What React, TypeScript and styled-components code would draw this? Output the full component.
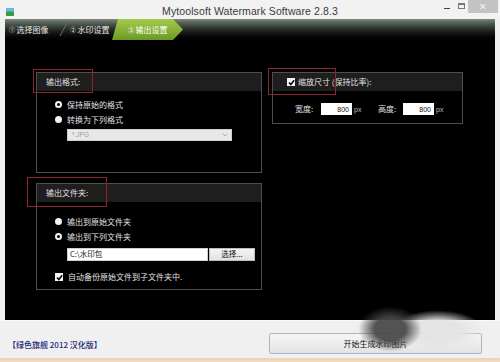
import React from 'react';
import styled, { createGlobalStyle } from 'styled-components';

const Global = createGlobalStyle`
  html, body { margin: 0; padding: 0; width: 500px; height: 362px; overflow: hidden; background: #f0f0f0; }
  body { font-family: "Liberation Sans", "Noto Sans CJK SC", sans-serif; }
  * { box-sizing: border-box; }
`;

const CJK = `"Noto Sans CJK SC", "Liberation Sans", sans-serif`;

const Window = styled.div`
  position: relative;
  width: 500px;
  height: 362px;
  display: flex;
  flex-direction: column;
  background: #f0f0f0;
  overflow: hidden;
`;

const TitleBar = styled.div`
  height: 19px;
  display: grid;
  grid-template-columns: 1fr auto 1fr;
  align-items: center;
  background: #f2f2f2;
`;

const TitleIcon = styled.div`
  padding-left: 6px;
  padding-top: 4px;
  display: flex;
  align-items: center;
`;

const TitleText = styled.div`
  font-family: "Liberation Sans", sans-serif;
  font-size: 10.5px;
  color: #3a3a3a;
  letter-spacing: 0.1px;
  padding-top: 2px;
`;

const Controls = styled.div`
  display: flex;
  justify-content: flex-end;
  align-self: start;
  padding-right: 2px;
  height: 19px;
`;

const CtlBtn = styled.div<{ $w: number }>`
  width: ${p => p.$w}px;
  height: 13px;
  display: flex;
  align-items: center;
  justify-content: center;
`;

const CloseBtn = styled.div`
  width: 30px;
  height: 13px;
  background: #c3c3c3;
  color: #f6f6f6;
  font-family: "Liberation Sans", sans-serif;
  font-size: 9px;
  display: flex;
  align-items: center;
  justify-content: center;
`;

const MinGlyph = styled.div`
  width: 6px;
  height: 1.5px;
  background: #444;
  margin-top: 4px;
`;

const MaxGlyph = styled.div`
  width: 7px;
  height: 6px;
  border: 1px solid #777;
  border-top-width: 2px;
  margin-top: -2px;
`;

const Frame = styled.div`
  padding: 0 5px;
  display: flex;
  flex-direction: column;
`;

const TabBar = styled.div`
  height: 21px;
  display: flex;
  align-items: stretch;
  background: linear-gradient(#7c8b7e 0%, #566157 18%, #343a35 40%, #1b1d1b 60%, #070707 82%, #000 100%);
`;

const Tab = styled.div<{ $w: number; $pl: number }>`
  width: ${p => p.$w}px;
  padding-left: ${p => p.$pl}px;
  display: flex;
  align-items: center;
  font-family: ${CJK};
  font-size: 8px;
  line-height: 1;
  color: #e4e4e4;
  padding-top: 1px;
`;

const ActiveTab = styled(Tab)`
  color: #ffffff;
  background: linear-gradient(#a6c94c 0%, #8cb53a 45%, #6a9a24 100%);
  clip-path: polygon(6px 0, 61px 0, 71px 50%, 61px 100%, 0 100%);
`;

const TabNum = styled.span`
  font-size: 6px;
  margin-right: 1.5px;
`;

const Sep = styled.div`
  width: 12px;
  display: flex;
  align-items: center;
  justify-content: center;
  &::before {
    content: '';
    width: 1px;
    height: 15px;
    background: #6a6a6a;
    transform: rotate(28deg);
  }
`;

const Main = styled.div`
  height: 280px;
  background: #000;
  display: grid;
  grid-template-columns: 226px 191px;
  column-gap: 10px;
  align-items: start;
  padding: 32px 0 0 31px;
`;

const Column = styled.div`
  display: flex;
  flex-direction: column;
  gap: 10px;
`;

const Group = styled.div<{ $h: number }>`
  height: ${p => p.$h}px;
  border: 1px solid #4e4e4e;
  display: flex;
  flex-direction: column;
`;

const GroupHeader = styled.div<{ $pl: number }>`
  height: 18px;
  flex: none;
  background: #1e1e1e;
  display: flex;
  align-items: center;
  gap: 3px;
  padding-left: ${p => p.$pl}px;
  font-family: ${CJK};
  font-size: 8px;
  line-height: 1;
  color: #e2e2e2;
`;

const GroupBody = styled.div<{ $pt: number; $pl: number }>`
  padding: ${p => p.$pt}px 0 0 ${p => p.$pl}px;
  display: flex;
  flex-direction: column;
`;

const OptRow = styled.div<{ $mt?: number }>`
  height: 15px;
  margin-top: ${p => p.$mt ?? 0}px;
  display: flex;
  align-items: center;
  gap: 5px;
  font-family: ${CJK};
  font-size: 8px;
  line-height: 1;
  color: #e2e2e2;
`;

const Radio = styled.span<{ $filled: boolean }>`
  width: 7px;
  height: 7px;
  border-radius: 50%;
  flex: none;
  background: ${p => (p.$filled ? '#f2f2f2' : '#000')};
  border: ${p => (p.$filled ? 'none' : '2px solid #f2f2f2')};
`;

const CheckBoxBox = styled.span`
  width: 8px;
  height: 8px;
  flex: none;
  background: #f4f4f4;
  display: flex;
  align-items: center;
  justify-content: center;
`;

const Select = styled.div`
  margin: 1.5px 0 0 12px;
  width: 165px;
  height: 12px;
  background: #e8e8e8;
  border: 1px solid #cfcfcf;
  display: flex;
  align-items: center;
  justify-content: space-between;
  padding: 0 3px 0 4px;
  font-family: "Liberation Sans", sans-serif;
  font-size: 6.5px;
  color: #9a9a9a;
`;

const PathRow = styled.div`
  margin: 3.5px 0 0 12px;
  display: flex;
  height: 13px;
  gap: 1px;
`;

const PathInput = styled.div`
  width: 141px;
  height: 13px;
  background: #fff;
  border: 1px solid #d0d0d0;
  display: flex;
  align-items: center;
  padding-left: 2px;
  font-family: ${CJK};
  font-size: 7.5px;
  line-height: 1;
  color: #111;
`;

const BrowseBtn = styled.div`
  width: 46px;
  height: 13px;
  background: linear-gradient(#f4f4f4, #e2e2e2);
  border: 1px solid #bdbdbd;
  display: flex;
  align-items: center;
  justify-content: center;
  font-family: ${CJK};
  font-size: 7.5px;
  line-height: 1;
  color: #111;
`;

const SizeRow = styled.div`
  height: 12px;
  display: flex;
  align-items: center;
  font-family: ${CJK};
  font-size: 8px;
  line-height: 1;
  color: #e2e2e2;
`;

const SizeLabel = styled.span<{ $w: number }>`
  width: ${p => p.$w}px;
`;

const NumInput = styled.div`
  width: 31px;
  height: 12px;
  background: #fff;
  display: flex;
  align-items: center;
  justify-content: flex-end;
  padding-right: 3px;
  font-family: "Liberation Sans", sans-serif;
  font-size: 7px;
  color: #111;
`;

const Unit = styled.span<{ $w: number }>`
  width: ${p => p.$w}px;
  padding-left: 2px;
  font-family: "Liberation Sans", sans-serif;
  font-size: 7px;
  color: #bdbdbd;
`;

const Footer = styled.div`
  height: 38px;
  display: flex;
  align-items: center;
  justify-content: space-between;
  padding: 0 18px 0 8px;
  border-top: 1px solid #fafafa;
`;

const Status = styled.div`
  font-family: ${CJK};
  font-size: 8px;
  font-weight: 500;
  line-height: 1;
  color: #1f2a7a;
  padding-top: 10px;
`;

const StartBtn = styled.div`
  width: 213px;
  height: 21px;
  margin-top: 8px;
  border: 1px solid #a7b6c6;
  border-radius: 2px;
  background: linear-gradient(#f6f6f6, #e4e4e4);
  display: flex;
  align-items: center;
  justify-content: center;
  font-family: ${CJK};
  font-size: 8px;
  line-height: 1;
  color: #111;
`;

const BottomStrip = styled.div`
  height: 4px;
  background: linear-gradient(#e9d3b6, #f4dcc0);
`;

const Mark = styled.div<{ $x: number; $y: number; $w: number; $h: number }>`
  position: absolute;
  left: ${p => p.$x}px;
  top: ${p => p.$y}px;
  width: ${p => p.$w}px;
  height: ${p => p.$h}px;
  border: 1px solid #8c2530;
  pointer-events: none;
`;

const Smudge = styled.div<{ $x: number; $y: number; $w: number; $h: number; $c: string }>`
  position: absolute;
  z-index: 5;
  left: ${p => p.$x}px;
  top: ${p => p.$y}px;
  width: ${p => p.$w}px;
  height: ${p => p.$h}px;
  background: radial-gradient(ellipse at center, ${p => p.$c} 0%, ${p => p.$c} 35%, transparent 70%);
  pointer-events: none;
`;

const Tick = () => (
  <CheckBoxBox>
    <svg width="7" height="7" viewBox="0 0 7 7">
      <path d="M1 3.6 L2.8 5.5 L6.2 1.2" stroke="#000" strokeWidth="1.5" fill="none" />
    </svg>
  </CheckBoxBox>
);

export default function App() {
  return (
    <Window>
      <Global />
      <TitleBar>
        <TitleIcon>
          <svg width="8" height="8" viewBox="0 0 8 8">
            <rect x="0" y="0" width="8" height="8" fill="#3a8fb0" />
            <rect x="0" y="0" width="8" height="3.5" fill="#6fb8d8" />
            <path d="M0 8 L0 5 L3 3.5 L5.5 5 L8 4 L8 8 Z" fill="#3f9a3a" />
          </svg>
        </TitleIcon>
        <TitleText>Mytoolsoft Watermark Software 2.8.3</TitleText>
        <Controls>
          <CtlBtn $w={14}><MinGlyph /></CtlBtn>
          <CtlBtn $w={14}><MaxGlyph /></CtlBtn>
          <CloseBtn>✕</CloseBtn>
        </Controls>
      </TitleBar>
      <Frame>
        <TabBar>
          <Tab $w={52} $pl={4}><TabNum>①</TabNum>选择图像</Tab>
          <Sep />
          <Tab $w={43} $pl={1}><TabNum>②</TabNum>水印设置</Tab>
          <ActiveTab $w={71} $pl={16}><TabNum>③</TabNum>输出设置</ActiveTab>
        </TabBar>
        <Main>
          <Column>
            <Group $h={101}>
              <GroupHeader $pl={9}>输出格式:</GroupHeader>
              <GroupBody $pt={6} $pl={18}>
                <OptRow><Radio $filled={false} />保持原始的格式</OptRow>
                <OptRow><Radio $filled={true} />转换为下列格式</OptRow>
                <Select>
                  <span>*.JPG</span>
                  <svg width="6" height="4" viewBox="0 0 6 4">
                    <path d="M0.5 0.5 L3 3 L5.5 0.5" stroke="#aaa" strokeWidth="0.9" fill="none" />
                  </svg>
                </Select>
              </GroupBody>
            </Group>
            <Group $h={107}>
              <GroupHeader $pl={9}>输出文件夹:</GroupHeader>
              <GroupBody $pt={12} $pl={18}>
                <OptRow><Radio $filled={true} />输出到原始文件夹</OptRow>
                <OptRow><Radio $filled={false} />输出到下列文件夹</OptRow>
                <PathRow>
                  <PathInput>C:\水印包</PathInput>
                  <BrowseBtn>选择...</BrowseBtn>
                </PathRow>
                <OptRow $mt={9}><Tick />自动备份原始文件到子文件夹中.</OptRow>
              </GroupBody>
            </Group>
          </Column>
          <Column>
            <Group $h={52}>
              <GroupHeader $pl={14}><Tick />缩放尺寸 (保持比率):</GroupHeader>
              <GroupBody $pt={12} $pl={22}>
                <SizeRow>
                  <SizeLabel $w={26}>宽度:</SizeLabel>
                  <NumInput>800</NumInput>
                  <Unit $w={26}>px</Unit>
                  <SizeLabel $w={25}>高度:</SizeLabel>
                  <NumInput>800</NumInput>
                  <Unit $w={14}>px</Unit>
                </SizeRow>
              </GroupBody>
            </Group>
          </Column>
        </Main>
      </Frame>
      <Footer>
        <Status>【绿色旗舰 2012 汉化版】</Status>
        <StartBtn>开始生成水印图片</StartBtn>
      </Footer>
      <BottomStrip />
      <Mark $x={33} $y={69} $w={60} $h={24} />
      <Mark $x={27} $y={177} $w={80} $h={30} />
      <Mark $x={268} $y={68} $w={68} $h={27} />
      <Smudge $x={390} $y={310} $w={95} $h={42} $c="rgba(228,228,228,0.95)" />
      <Smudge $x={358} $y={306} $w={64} $h={46} $c="rgba(70,70,70,0.92)" />
    </Window>
  );
}
